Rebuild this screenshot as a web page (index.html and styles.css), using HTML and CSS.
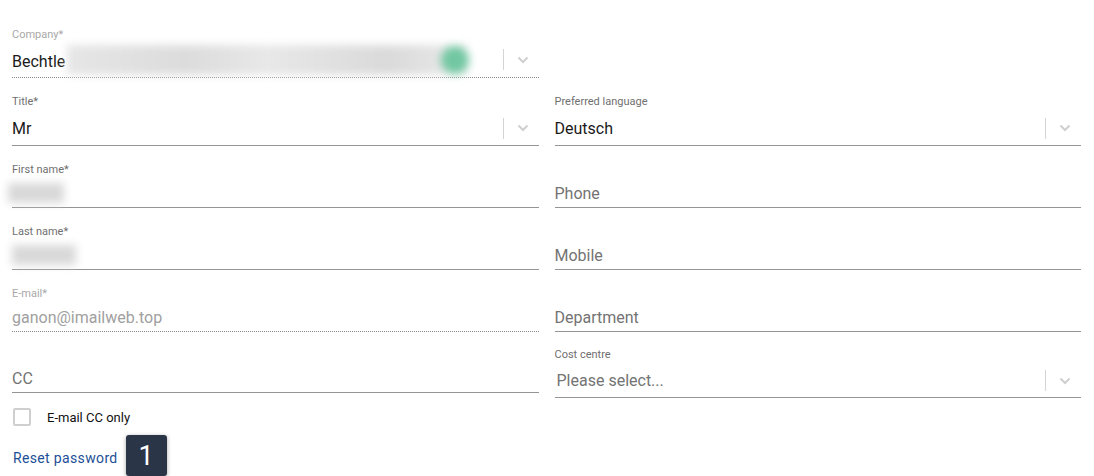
FILE: index.html
```html
<!DOCTYPE html>
<html lang="en">
<head>
  <meta charset="UTF-8">
  <title>Contact details</title>
  <link rel="stylesheet" href="styles.css">
</head>
<body>
  <div class="page">
    <div class="form-grid">
      <div class="field select disabled company">
        <label>Company*</label>
        <div class="control dotted">
          <span class="value">Bechtle</span>
          <span class="blur company-blur"><span class="dot"></span></span>
          <span class="indicator"><span class="divider"></span>
            <svg width="12" height="8" viewBox="0 0 12 8"><path d="M1.5 1.5 L6 6 L10.5 1.5" fill="none" stroke="#cfcfcf" stroke-width="2"/></svg>
          </span>
        </div>
      </div>
      <div></div>

      <div class="field select">
        <label>Title*</label>
        <div class="control">
          <span class="value">Mr</span>
          <span class="indicator"><span class="divider"></span>
            <svg width="12" height="8" viewBox="0 0 12 8"><path d="M1.5 1.5 L6 6 L10.5 1.5" fill="none" stroke="#cfcfcf" stroke-width="2"/></svg>
          </span>
        </div>
      </div>
      <div class="field select">
        <label>Preferred language</label>
        <div class="control">
          <span class="value">Deutsch</span>
          <span class="indicator"><span class="divider"></span>
            <svg width="12" height="8" viewBox="0 0 12 8"><path d="M1.5 1.5 L6 6 L10.5 1.5" fill="none" stroke="#cfcfcf" stroke-width="2"/></svg>
          </span>
        </div>
      </div>

      <div class="field input">
        <label>First name*</label>
        <div class="control">
          <span class="blur first-blur"></span>
        </div>
      </div>
      <div class="field input">
        <label></label>
        <div class="control"><span class="placeholder">Phone</span></div>
      </div>

      <div class="field input">
        <label>Last name*</label>
        <div class="control">
          <span class="blur last-blur"></span>
        </div>
      </div>
      <div class="field input">
        <label></label>
        <div class="control"><span class="placeholder">Mobile</span></div>
      </div>

      <div class="field input disabled">
        <label>E-mail*</label>
        <div class="control dotted"><span class="value">ganon@imailweb.top</span></div>
      </div>
      <div class="field input">
        <label></label>
        <div class="control"><span class="placeholder">Department</span></div>
      </div>

      <div class="field input tight">
        <label></label>
        <div class="control"><span class="placeholder">CC</span></div>
      </div>
      <div class="field select tight">
        <label>Cost centre</label>
        <div class="control">
          <span class="placeholder select-ph">Please select...</span>
          <span class="indicator"><span class="divider"></span>
            <svg width="12" height="8" viewBox="0 0 12 8"><path d="M1.5 1.5 L6 6 L10.5 1.5" fill="none" stroke="#cfcfcf" stroke-width="2"/></svg>
          </span>
        </div>
      </div>
    </div>

    <div class="check-row">
      <span class="checkbox"></span>
      <span class="check-label">E-mail CC only</span>
    </div>

    <div class="reset-row">
      <a class="reset-link" href="#">Reset password</a>
      <span class="badge">1</span>
    </div>
  </div>
</body>
</html>
```

FILE: styles.css
```css
body {
  margin: 0;
  font-family: Roboto, "Liberation Sans", Arial, sans-serif;
  background: #ffffff;
  color: #212121;
}

.page {
  padding: 27px 13px 0 12px;
}

.form-grid {
  display: grid;
  grid-template-columns: 1fr 1fr;
  column-gap: 16px;
  row-gap: 17px;
  align-items: start;
}

.field.tight {
  margin-top: -1px;
}

.field label {
  display: block;
  height: 14px;
  font-size: 11px;
  line-height: 14px;
  color: #6f6f6f;
}

.field.disabled label {
  color: #a8a8a8;
}

.company label {
  padding-top: 1px;
  height: 13px;
}

.control {
  display: flex;
  align-items: center;
  box-sizing: border-box;
  border-bottom: 1px solid #949494;
  font-size: 16px;
  position: relative;
}

.select .control {
  height: 37px;
  padding-top: 2px;
}

.select.tight .control {
  height: 36px;
}

.company .control {
  padding-top: 5px;
}

.input .control {
  height: 31px;
  padding-top: 2px;
}

.control.dotted {
  border-bottom: 1px dotted #8a8a8a;
}

.value {
  color: #1a1a1a;
}

.disabled.input .value {
  color: #a0a0a0;
}

.placeholder {
  color: #737373;
}

.select-ph {
  padding-left: 2px;
}

.indicator {
  margin-left: auto;
  display: flex;
  align-items: center;
  width: 36px;
  height: 21px;
}

.company .indicator {
  margin-top: -4px;
}

.divider {
  width: 1px;
  height: 21px;
  background: #d4d4d4;
}

.indicator svg {
  margin-left: 13px;
}

.blur {
  display: inline-block;
  background: #d9d9d9;
  filter: blur(4px);
}

.company-blur {
  width: 400px;
  height: 30px;
  margin-left: 2px;
  margin-top: -4px;
  position: relative;
  background: linear-gradient(90deg, #e6e6e6, #dcdcdc 30%, #e8e8e8 50%, #dadada 80%, #eaeaea);
}

.company-blur .dot {
  position: absolute;
  right: -2px;
  top: 1px;
  width: 28px;
  height: 28px;
  border-radius: 50%;
  background: #72c7a2;
}

.first-blur {
  width: 56px;
  height: 20px;
  margin-left: -4px;
}

.last-blur {
  width: 64px;
  height: 20px;
  margin-left: 0;
}

.check-row {
  display: flex;
  align-items: center;
  margin-top: 10px;
  padding-left: 1px;
}

.checkbox {
  width: 18px;
  height: 18px;
  box-sizing: border-box;
  border: 2px solid #cfcfcf;
  border-radius: 2px;
}

.check-label {
  margin-left: 16px;
  font-size: 13px;
  color: #111111;
}

.reset-row {
  display: flex;
  align-items: center;
  margin-top: 9px;
}

.reset-link {
  font-size: 14px;
  letter-spacing: 0.35px;
  color: #1c4f96;
  text-decoration: none;
  padding-top: 5px;
  padding-left: 1px;
}

.badge {
  margin-left: 8px;
  width: 41px;
  height: 41px;
  display: flex;
  align-items: center;
  justify-content: center;
  background: #2b3548;
  color: #ffffff;
  font-size: 27px;
  border-radius: 3px;
  box-shadow: 0 1px 4px rgba(0, 0, 0, 0.35);
}
```
